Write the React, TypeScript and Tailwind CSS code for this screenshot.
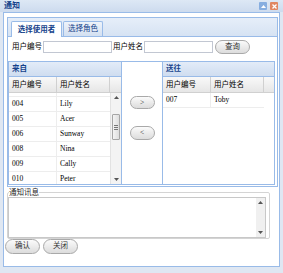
import React from "react";

const fromRows = [
  ["", ""],
  ["004", "Lily"],
  ["005", "Acer"],
  ["006", "Sunway"],
  ["008", "Nina"],
  ["009", "Cally"],
  ["010", "Peter"],
];

function PillButton({ label, className }: { label: string; className: string }) {
  return (
    <button
      className={
        "flex items-center justify-center rounded-full border border-[#a9a9a9] bg-linear-to-b from-[#fbfbfb] to-[#dcdcdc] text-[#333] " +
        className
      }
    >
      {label}
    </button>
  );
}

function PanelHead({ title }: { title: string }) {
  return (
    <>
      <div className="flex h-[15px] shrink-0 items-center border-b border-[#99bbe8] bg-linear-to-b from-[#e3ecf8] to-[#cfddf0] pl-[3px] font-bold text-[#15428b]">
        {title}
      </div>
      <div className="flex h-[16px] shrink-0 border-b border-[#d0d0d0] bg-linear-to-b from-[#f9f9f9] to-[#e6e6e6]">
        <div className="flex w-[48px] items-center border-r border-[#d0d0d0] pl-[3px]">用户编号</div>
        <div className="flex w-[53px] items-center border-r border-[#d0d0d0] pl-[3px]">用户姓名</div>
        <div className="flex-1" />
      </div>
    </>
  );
}

function Arrow({ up }: { up?: boolean }) {
  return (
    <svg width="5" height="3" viewBox="0 0 5 3">
      <polygon points={up ? "0,3 5,3 2.5,0" : "0,0 5,0 2.5,3"} fill="#555" />
    </svg>
  );
}

export default function App() {
  return (
    <div className="h-[273px] w-[283px] overflow-hidden bg-[#dfe7f2] font-['Liberation_Serif','Noto_Sans_CJK_SC',serif] text-[7.5px] leading-none text-black">
      {/* title bar */}
      <div className="flex h-[12px] items-center justify-between bg-linear-to-b from-[#dde8f5] to-[#cddbee] pl-[4px] pr-[5px]">
        <div className="font-bold text-[8px] text-[#15428b]">通知</div>
        <div className="flex gap-[3px]">
          <div className="flex h-[8px] w-[8px] items-center justify-center rounded-[1px] bg-[#87aee0]">
            <svg width="5" height="3" viewBox="0 0 5 3">
              <polygon points="0,3 5,3 2.5,0" fill="#fff" />
            </svg>
          </div>
          <div className="flex h-[8px] w-[8px] items-center justify-center rounded-[1px] bg-[#e08762]">
            <svg width="5" height="5" viewBox="0 0 5 5">
              <path d="M0.5 0.5 L4.5 4.5 M4.5 0.5 L0.5 4.5" stroke="#fff" strokeWidth="1.3" />
            </svg>
          </div>
        </div>
      </div>

      {/* window body */}
      <div className="mx-[3px] h-[255px] border border-[#99bbe8] bg-white">
        {/* tab panel */}
        <div className="ml-[3px] mr-[1px] mt-[4px] h-[170px] border border-[#99bbe8]">
          <div className="flex h-[19px] items-end gap-[1px] border-b border-[#99bbe8] bg-linear-to-b from-[#e6eef9] to-[#d6e3f3] pl-[3px]">
            <div className="-mb-px flex h-[16px] w-[51px] items-center justify-center rounded-t-[2px] border border-b-0 border-[#99bbe8] bg-white font-bold text-[#15428b]">
              选择使用者
            </div>
            <div className="flex h-[15px] w-[40px] items-center justify-center rounded-t-[2px] border border-b-0 border-[#99bbe8] bg-linear-to-b from-[#eef3fa] to-[#d3e0f1] text-[#15428b]">
              选择角色
            </div>
          </div>

          {/* search row */}
          <div className="flex h-[20px] items-center pl-[4px]">
            <span className="w-[31px]">用户编号</span>
            <div className="h-[12px] w-[69px] border border-[#c2c7d2] bg-white" />
            <span className="ml-[1px] w-[31px]">用户姓名</span>
            <div className="h-[12px] w-[69px] border border-[#c2c7d2] bg-white" />
            <PillButton label="查询" className="ml-[2px] h-[14px] w-[35px]" />
          </div>

          {/* panels */}
          <div className="mt-[4px] flex h-[124px] w-[267px]">
            <div className="flex w-[114px] flex-col border border-[#99bbe8]">
              <PanelHead title="来自" />
              <div className="flex min-h-0 flex-1">
                <div className="w-[101px] overflow-hidden">
                  <div className="-mt-[11px]">
                    {fromRows.map(([id, name], i) => (
                      <div key={i} className="flex h-[15px] border-b border-[#ededed]">
                        <div className="flex w-[48px] items-center border-r border-[#ededed] pl-[3px]">{id}</div>
                        <div className="flex w-[53px] items-center pl-[3px]">{name}</div>
                      </div>
                    ))}
                  </div>
                </div>
                <div className="flex w-[11px] flex-col items-center border-l border-[#e2e2e2] bg-[#f3f3f3]">
                  <div className="flex h-[9px] items-center"><Arrow up /></div>
                  <div className="mt-[12px] flex h-[26px] w-[8px] flex-col items-center justify-center gap-[1px] rounded-[1px] border border-[#a6a6a6] bg-linear-to-r from-[#f4f4f4] to-[#dedede]">
                    <div className="h-px w-[4px] bg-[#777]" />
                    <div className="h-px w-[4px] bg-[#777]" />
                    <div className="h-px w-[4px] bg-[#777]" />
                  </div>
                  <div className="flex-1" />
                  <div className="flex h-[9px] items-center"><Arrow /></div>
                </div>
              </div>
            </div>

            <div className="flex w-[40px] flex-col items-center border-y border-[#99bbe8] bg-white">
              <PillButton label=">" className="mt-[34px] h-[13px] w-[25px]" />
              <PillButton label="<" className="mt-[17px] h-[14px] w-[25px]" />
            </div>

            <div className="flex w-[113px] flex-col border border-[#99bbe8]">
              <PanelHead title="送往" />
              <div className="flex h-[15px] w-[101px] border-b border-[#ededed]">
                <div className="flex w-[48px] items-center border-r border-[#ededed] pl-[3px]">007</div>
                <div className="flex w-[53px] items-center pl-[3px]">Toby</div>
              </div>
            </div>
          </div>
        </div>

        {/* message */}
        <fieldset className="ml-[3px] mt-[2px] w-[263px] rounded-[2px] border border-[#d4d4d4] pr-[3px]">
          <legend className="ml-[1px] px-0 text-[#222]">通知讯息</legend>
          <div className="flex h-[41px] border border-[#c8c8c8] bg-white">
            <textarea className="flex-1 resize-none overflow-hidden outline-none" />
            <div className="flex w-[9px] flex-col items-center justify-between bg-[#f0f0f0] py-[3px]">
              <Arrow up />
              <Arrow />
            </div>
          </div>
        </fieldset>

        {/* actions */}
        <div className="ml-[1px] flex gap-[3px]">
          <PillButton label="确认" className="h-[15px] w-[35px]" />
          <PillButton label="关闭" className="h-[15px] w-[35px]" />
        </div>
      </div>
    </div>
  );
}
